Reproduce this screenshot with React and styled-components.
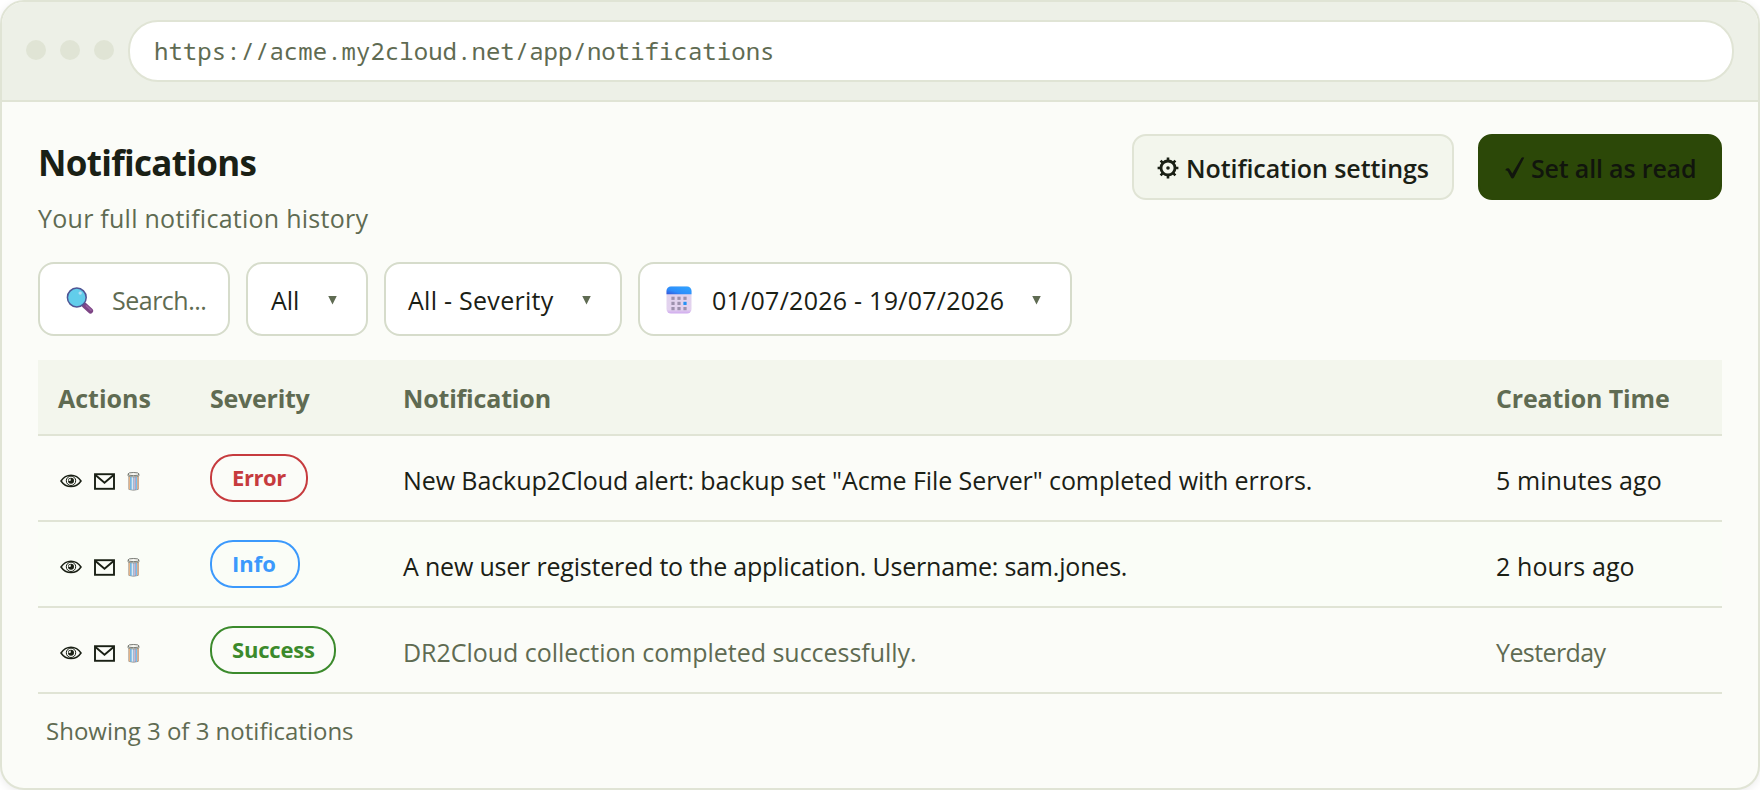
import React from "react";
import styled, { createGlobalStyle } from "styled-components";

const GlobalStyle = createGlobalStyle`
  * {
    box-sizing: border-box;
  }
  body {
    margin: 0;
    background: #ffffff;
    font-family: "Open Sans", "Noto Sans", sans-serif;
    font-size: 25px;
    color: #1a2015;
  }
`;

const Browser = styled.div`
  width: 1760px;
  height: 790px;
  border: 2px solid #e0e4d5;
  border-radius: 24px;
  background: #fbfcf8;
  box-shadow: 0 2px 8px rgba(0, 0, 0, 0.08);
  overflow: hidden;
`;

const AddressBar = styled.div`
  display: flex;
  align-items: center;
  height: 100px;
  padding: 0 24px;
  border-bottom: 2px solid #e0e4d5;
  background: #edf0e7;
`;

const Dots = styled.div`
  display: flex;
  gap: 14px;
  margin-right: 14px;
  padding-bottom: 2px;
`;

const Dot = styled.span`
  width: 20px;
  height: 20px;
  border-radius: 50%;
  background: #e0e4d5;
`;

const Url = styled.div`
  flex: 1;
  height: 62px;
  padding-left: 24px;
  border: 2px solid #e0e4d5;
  border-radius: 30px;
  background: #ffffff;
  color: #5f6b52;
  font-family: "Noto Sans Mono", "Liberation Mono", monospace;
  font-size: 24px;
  line-height: 58px;
  letter-spacing: 0.03px;
`;

const Content = styled.main`
  padding: 32px 36px 0;
`;

const Header = styled.header`
  display: flex;
  justify-content: space-between;
  align-items: flex-start;
  height: 128px;
`;

const Title = styled.h1`
  margin: 5px 0 13px;
  font-size: 35px;
  line-height: 48px;
  font-weight: 700;
  letter-spacing: -0.7px;
`;

const Subtitle = styled.p`
  margin: 0;
  line-height: 36px;
  letter-spacing: 0.26px;
  color: #5f6b52;
`;

const ButtonGroup = styled.div`
  display: flex;
  gap: 24px;
`;

const Button = styled.button`
  display: flex;
  align-items: center;
  gap: ${(p) => (p.$primary ? 6 : 7)}px;
  width: ${(p) => (p.$primary ? 244 : 322)}px;
  height: 66px;
  padding: 2px 0 0 ${(p) => (p.$primary ? 25 : 23)}px;
  border: 2px solid ${(p) => (p.$primary ? "#2c4808" : "#e0e4d5")};
  border-radius: 14px;
  background: ${(p) => (p.$primary ? "#2c4808" : "#f3f6ed")};
  color: ${(p) => (p.$primary ? "#11150d" : "#1a2015")};
  font-family: inherit;
  font-size: 25px;
  font-weight: 600;
  letter-spacing: ${(p) => (p.$primary ? "-0.17px" : "-0.07px")};
  white-space: nowrap;
`;

const Filters = styled.div`
  display: flex;
  gap: 16px;
  margin-bottom: 24px;
`;

const Filter = styled.div`
  display: flex;
  align-items: center;
  width: ${(p) => p.$width}px;
  height: 74px;
  padding: 2px 29px 0 ${(p) => (p.$icon ? 26 : 22)}px;
  border: 2px solid #d6dccb;
  border-radius: 16px;
  background: #ffffff;
  color: ${(p) => (p.$placeholder ? "#5f6b52" : "#1a2015")};
  letter-spacing: ${(p) => p.$spacing || 0}px;
  white-space: nowrap;

  svg {
    flex: none;
  }
`;

const FilterText = styled.span`
  margin-left: ${(p) => p.$indent || 0}px;
`;

const Arrow = styled.span`
  width: 9px;
  height: 9px;
  margin-left: auto;
  margin-bottom: 0;
  background: #5f6b52;
  clip-path: polygon(0 0, 100% 0, 50% 100%);
`;

const Table = styled.div`
  display: flex;
  flex-direction: column;
`;

const Row = styled.div`
  display: grid;
  grid-template-columns: 152px 193px 1093px 1fr;
  align-items: center;
  height: 86px;
  padding: 0 20px;
  border-bottom: 2px solid #e0e4d5;
  background: ${(p) => (p.$striped ? "#fafdf7" : "transparent")};
  color: ${(p) => (p.$read ? "#5f6b52" : "#1a2015")};
`;

const HeadRow = styled(Row)`
  height: 76px;
  padding-top: 2px;
  background: #f3f6ed;
  color: #5f6b52;
  font-weight: 700;
`;

const Cell = styled.span`
  letter-spacing: ${(p) => p.$spacing || 0}px;
  padding-top: ${(p) => (p.$head ? 0 : 4)}px;
  white-space: nowrap;
`;

const Actions = styled.div`
  display: flex;
  align-items: center;
  gap: 12px;
  padding: 6px 0 0 2px;
  color: #1a2015;
`;

const colours = {
  Error: "#c63b3e",
  Info: "#3b99fc",
  Success: "#3b8a2c",
};

const Badge = styled.span`
  display: inline-flex;
  align-items: center;
  height: 48px;
  width: ${(p) => p.$width}px;
  padding: 0 0 2px 20px;
  border: 2px solid ${(p) => colours[p.$severity]};
  border-radius: 23px;
  color: ${(p) => colours[p.$severity]};
  font-size: 22px;
  font-weight: 700;
  letter-spacing: ${(p) => p.$spacing}px;
`;

const Footer = styled.p`
  margin: 19px 0 0 8px;
  font-size: 24px;
  line-height: 36px;
  color: #5f6b52;
`;

const GearIcon = () => (
  <svg width="22" height="22" viewBox="0 0 22 22" fill="none" stroke="currentColor">
    <circle cx="11" cy="11" r="7" strokeWidth="2.8" />
    <circle cx="11" cy="11" r="1.8" fill="currentColor" stroke="none" />
    <g strokeWidth="2.6">
      <path d="M11 .6v3M11 18.4v3M.6 11h3M18.4 11h3M3.6 3.6l2.2 2.2M16.2 16.2l2.2 2.2M3.6 18.4l2.2-2.2M16.2 5.8l2.2-2.2" />
    </g>
  </svg>
);

const CheckIcon = () => (
  <svg width="20" height="22" viewBox="0 0 20 22" fill="currentColor">
    <path d="M.6 12.2c1.4-1.4 3.400-1.200 4.200.2l2.500 4.200L16.400 1c.7-1.100 2.400-1 2.800-.2L9 20.600c-.8 1.300-2.300 1.300-3 0L2.800 14.600c-.4-.9-1.200-1.300-2.200-1z" />
  </svg>
);

const SearchIcon = () => (
  <svg width="28" height="28" viewBox="0 0 28 28">
    <path d="M18.4 19.2l6 5.600" stroke="#7d4585" strokeWidth="5.400" strokeLinecap="round" />
    <path d="M20.4 19.900l4.600 4.300" stroke="#98609f" strokeWidth="1.600" strokeLinecap="round" />
    <circle cx="10.800" cy="11.500" r="9.400" fill="#62cdeb" stroke="#4f5595" strokeWidth="1.500" />
    <circle cx="14.200" cy="7.100" r="1.700" fill="#b3dff6" />
  </svg>
);

const CalendarIcon = () => (
  <svg width="26" height="28" viewBox="0 0 26 28">
    <defs>
      <linearGradient id="calTop" x1="0" y1="1" x2="1" y2="0">
        <stop offset="0" stopColor="#3455d8" />
        <stop offset=".35" stopColor="#2d8dfb" />
        <stop offset="1" stopColor="#30a6ff" />
      </linearGradient>
      <linearGradient id="calPage" x1="0" y1="0" x2="0" y2="1">
        <stop offset="0" stopColor="#e0d3ea" />
        <stop offset=".85" stopColor="#e3d2ef" />
        <stop offset="1" stopColor="#cfa9ee" />
      </linearGradient>
    </defs>
    <rect x=".5" y=".5" width="25" height="27" rx="4.5" fill="url(#calPage)" />
    <path d="M.5 8.2V5A4.500 4.500 0 0 1 5 .5h16A4.500 4.500 0 0 1 25.500 5v3.200z" fill="url(#calTop)" />
    {[10.7, 15.8, 21].map((y) =>
      [5.4, 11.4, 17.4].map((x) => (
        <rect
          key={`${x}-${y}`}
          x={x}
          y={y}
          width="3.2"
          height="3.2"
          fill={x === 17.4 && y === 15.8 ? "#2591f4" : "#9d91ad"}
        />
      ))
    )}
  </svg>
);

const EyeIcon = () => (
  <svg width="22" height="14" viewBox="0 0 22 14" fill="none" stroke="currentColor">
    <path d="M1 7C3.600 3.100 7 1.200 11 1.200S18.400 3.100 21 7c-2.600 3.900-6 5.600-10 5.600S3.600 10.900 1 7z" strokeWidth="1.500" />
    <circle cx="11" cy="6.800" r="4.700" strokeWidth="1" />
    <circle cx="11" cy="6.800" r="3" fill="currentColor" stroke="none" />
    <path d="M8.600 6.900c0-1.600.9-2.500 2.200-2.500l-.1 2.300z" fill="#fbfcf8" stroke="none" />
  </svg>
);

const MailIcon = () => (
  <svg width="21" height="17" viewBox="0 0 21 17" fill="none" stroke="currentColor" strokeWidth="1.9">
    <rect x="1" y="1.2" width="19" height="14.6" />
    <path d="M1.4 2l9.100 7.800L19.600 2" />
  </svg>
);

const TrashIcon = () => (
  <svg width="13" height="21" viewBox="0 0 14 21" fill="none">
    <path d="M2 4.5V19q5 2 10 0V4.500" fill="#f3f6f6" stroke="#77756f" strokeWidth=".7" />
    <path d="M2.500 5v14" stroke="#eca66b" strokeWidth="1" />
    <path d="M4.200 5.500v14" stroke="#56a8dd" strokeWidth="1.500" />
    <path d="M6.800 5.500v14.200" stroke="#82a7d0" strokeWidth="1" />
    <path d="M8.700 5.500v14" stroke="#7e6299" strokeWidth="1" />
    <path d="M10.200 5.500v14" stroke="#65bcf0" strokeWidth="1" />
    <path d="M11.800 5v14" stroke="#d98b55" strokeWidth="1" />
    <ellipse cx="7" cy="2.500" rx="6" ry="1.700" fill="#f6f6f1" stroke="#5f625b" strokeWidth=".9" />
    <path d="M1 2.800v1.500c2 1.600 10 1.600 12 0V2.800" stroke="#77796f" strokeWidth=".8" />
  </svg>
);

const notifications = [
  {
    severity: "Error",
    badgeWidth: 98,
    badgeSpacing: -0.4,
    text: 'New Backup2Cloud alert: backup set "Acme File Server" completed with errors.',
    spacing: -0.09,
    time: "5 minutes ago",
    timeSpacing: 0.08,
  },
  {
    severity: "Info",
    badgeWidth: 90,
    badgeSpacing: 0,
    text: "A new user registered to the application. Username: sam.jones.",
    spacing: -0.19,
    time: "2 hours ago",
    timeSpacing: 0.1,
  },
  {
    severity: "Success",
    badgeWidth: 126,
    badgeSpacing: -0.2,
    text: "DR2Cloud collection completed successfully.",
    spacing: -0.03,
    time: "Yesterday",
    timeSpacing: -0.6,
    read: true,
  },
];

const App = () => {
  return (
    <>
      <GlobalStyle />
      <Browser>
        <AddressBar>
          <Dots>
            <Dot />
            <Dot />
            <Dot />
          </Dots>
          <Url>https://acme.my2cloud.net/app/notifications</Url>
        </AddressBar>
        <Content>
          <Header>
            <div>
              <Title>Notifications</Title>
              <Subtitle>Your full notification history</Subtitle>
            </div>
            <ButtonGroup>
              <Button>
                <GearIcon />
                Notification settings
              </Button>
              <Button $primary>
                <CheckIcon />
                Set all as read
              </Button>
            </ButtonGroup>
          </Header>
          <Filters>
            <Filter $width={192} $icon $placeholder $spacing={-0.5}>
              <SearchIcon />
              <FilterText $indent={18}>Search...</FilterText>
            </Filter>
            <Filter $width={122}>
              <FilterText $indent={1}>All</FilterText>
              <Arrow />
            </Filter>
            <Filter $width={238} $spacing={0.27}>
              <FilterText>All - Severity</FilterText>
              <Arrow />
            </Filter>
            <Filter $width={434} $icon $spacing={0.26}>
              <CalendarIcon />
              <FilterText $indent={20}>01/07/2026 - 19/07/2026</FilterText>
              <Arrow />
            </Filter>
          </Filters>
          <Table>
            <HeadRow>
              <Cell $head>Actions</Cell>
              <Cell $head $spacing={-0.25}>Severity</Cell>
              <Cell $head $spacing={-0.17}>Notification</Cell>
              <Cell $head $spacing={-0.15}>Creation Time</Cell>
            </HeadRow>
            {notifications.map((item, i) => (
              <Row key={item.severity} $striped={i % 2 === 1} $read={item.read}>
                <Actions>
                  <EyeIcon />
                  <MailIcon />
                  <TrashIcon />
                </Actions>
                <div>
                  <Badge
                    $severity={item.severity}
                    $width={item.badgeWidth}
                    $spacing={item.badgeSpacing}
                  >
                    {item.severity}
                  </Badge>
                </div>
                <Cell $spacing={item.spacing}>{item.text}</Cell>
                <Cell $spacing={item.timeSpacing}>{item.time}</Cell>
              </Row>
            ))}
          </Table>
          <Footer>Showing 3 of 3 notifications</Footer>
        </Content>
      </Browser>
    </>
  );
};

export default App;
